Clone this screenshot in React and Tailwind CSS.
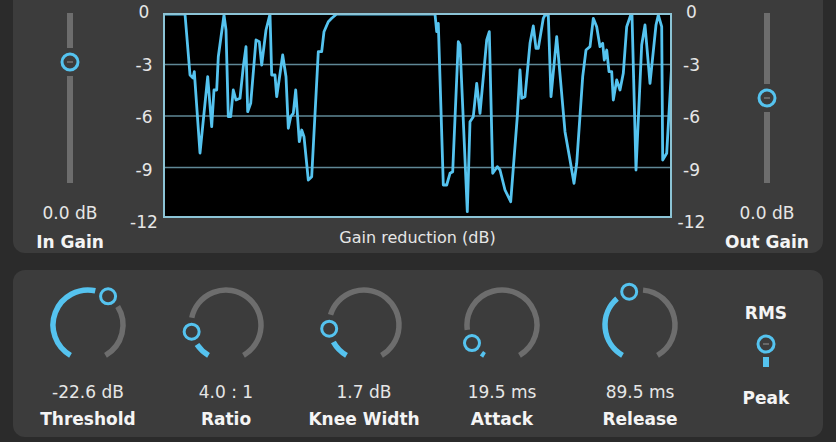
import React from 'react';

const CYAN = '#55c3ef';
const TRACK = '#6d6d6d';
const PANEL = '#3c3c3c';

// gain reduction trace, in page pixels (graph box is 163..672 x 13..218)
const trace = [
  [164, 14], [185, 14], [190, 75], [193, 78], [194.3, 71.7], [200, 153], [207.7, 76.7],
  [211.7, 126.7], [214, 90], [216.7, 90], [218.3, 56.7], [224, 15], [226, 30],
  [228.3, 116.7], [230.7, 116.7], [233.3, 90], [236, 100], [240, 98.3], [243.3, 66.7],
  [246, 46.7], [247.7, 111.7], [250.7, 103.3], [256, 40], [259.3, 41.7], [261.7, 65],
  [266, 30], [270, 14], [271.7, 75], [275, 75], [276.7, 96.7], [282.7, 55], [286, 76.7],
  [288.3, 128.3], [290.7, 116.7], [293.3, 113.3], [295.7, 90], [299.3, 141.7],
  [301.7, 130], [304, 136.7], [308.3, 180], [311.7, 176.7], [318.3, 51.7], [321.7, 51.7],
  [324, 31.7], [328.3, 21.7], [331.7, 18.3], [336.7, 14], [435, 14], [436.7, 31.7],
  [438.3, 23.3], [443.3, 185], [446.7, 185], [450, 173.3], [452.7, 171.7], [458.3, 41.7],
  [460, 45], [467.3, 211.7], [470, 121.7], [473.3, 116.7], [476.7, 83.3], [480, 113.3],
  [486.7, 40], [489.3, 31.7], [492.7, 173.3], [497.3, 166.7], [500, 170], [505, 190],
  [510.7, 201.7], [517.3, 116.7], [520, 70], [521.7, 98.3], [525, 96.7], [530, 43.3],
  [533.3, 26], [536, 48.3], [538.3, 48.3], [543.3, 18.3], [545, 15], [548.3, 15],
  [551, 96.7], [556.7, 36.7], [565, 131.7], [570, 160], [574, 183.3], [576.7, 163.3],
  [582.7, 76.7], [586, 50], [590, 46.7], [593.3, 18.3], [596.7, 26.7], [600, 46.7],
  [602.7, 43.3], [604.3, 60], [606.7, 50], [609, 71.7], [611.7, 71.7], [613.3, 100],
  [616.7, 80], [620, 90], [623.3, 73.3], [626.7, 26.7], [630.7, 15], [632, 15],
  [636, 170], [641.7, 45], [645, 25], [650, 83.3], [656, 25], [658.3, 15], [661.7, 26.7],
  [662.7, 160], [666.7, 153.3], [672, 60],
];

const knobs = [
  { value: '-22.6 dB', label: 'Threshold', angle: 35 },
  { value: '4.0 : 1', label: 'Ratio', angle: -101 },
  { value: '1.7 dB', label: 'Knee Width', angle: -96 },
  { value: '19.5 ms', label: 'Attack', angle: -121 },
  { value: '89.5 ms', label: 'Release', angle: -18 },
];

function pt(cx, cy, r, a) {
  const rad = (a * Math.PI) / 180;
  return [cx + r * Math.sin(rad), cy - r * Math.cos(rad)];
}

function arc(cx, cy, r, a1, a2) {
  if (a2 <= a1) return '';
  const [x1, y1] = pt(cx, cy, r, a1);
  const [x2, y2] = pt(cx, cy, r, a2);
  const large = a2 - a1 > 180 ? 1 : 0;
  return `M ${x1} ${y1} A ${r} ${r} 0 ${large} 1 ${x2} ${y2}`;
}

function Knob({ angle }) {
  const gap = 23;
  const [tx, ty] = pt(45, 45, 35, angle);
  return (
    <svg width="90" height="90" viewBox="0 0 90 90">
      <path d={arc(45, 45, 35, -150, angle - gap)} fill="none" stroke={CYAN} strokeWidth="5.5" />
      <path d={arc(45, 45, 35, angle + gap, 150)} fill="none" stroke={TRACK} strokeWidth="5.5" />
      <circle cx={tx} cy={ty} r="7.5" fill={PANEL} stroke={CYAN} strokeWidth="3" />
    </svg>
  );
}

function Slider({ thumb }) {
  // thumb = y centre inside the 203px tall box, track runs 13..183
  return (
    <svg width="30" height="203" viewBox="0 0 30 203">
      <rect x="12" y="13" width="6" height={thumb - 14 - 13} fill={TRACK} />
      <rect x="12" y={thumb + 14} width="6" height={183 - thumb - 14} fill={TRACK} />
      <circle cx="15" cy={thumb} r="8" fill={PANEL} stroke={CYAN} strokeWidth="3" />
      <rect x="12" y={thumb - 0.75} width="6" height="1.5" fill="#777" />
    </svg>
  );
}

function AxisLabels() {
  return (
    <div className="h-[231px] pt-[3px] flex flex-col justify-between items-center text-[17px] leading-[18px] text-[#e6e6e6]">
      {['0', '-3', '-6', '-9', '-12'].map((t) => (
        <div key={t}>{t}</div>
      ))}
    </div>
  );
}

export default function App() {
  const line = trace.map((p) => p.join(',')).join(' ');

  return (
    <div
      className="w-[836px] h-[442px] bg-[#2b2b2b] px-[13px] flex flex-col overflow-hidden"
      style={{ fontFamily: '"DejaVu Sans", Verdana, sans-serif' }}
    >
      {/* Top panel */}
      <div className="h-[253px] bg-[#3c3c3c] rounded-b-[12px] flex">
        <div className="w-[114px] flex flex-col items-center">
          <Slider thumb={62} />
          <div className="text-[17px] leading-[20px] text-[#e6e6e6]">0.0 dB</div>
          <div className="mt-[9px] text-[17px] leading-[20px] font-bold text-[#f4f4f4]">In Gain</div>
        </div>

        <div className="w-[34px]">
          <AxisLabels />
        </div>

        <div className="ml-[2px] w-[509px] flex flex-col">
          <svg
            className="mt-[13px]"
            width="509"
            height="205"
            viewBox="163 13 509 205"
          >
            <defs>
              <clipPath id="gr">
                <rect x="164" y="13" width="507" height="204" />
              </clipPath>
            </defs>
            <rect x="163" y="13" width="509" height="205" fill="#000" />
            {[64.5, 116, 167.5].map((y) => (
              <line key={y} x1="164" x2="671" y1={y} y2={y} stroke="#5f8896" strokeWidth="1.5" />
            ))}
            <polyline
              points={line}
              fill="none"
              stroke={CYAN}
              strokeWidth="2.8"
              strokeLinejoin="round"
              clipPath="url(#gr)"
            />
            <rect x="164" y="14" width="507" height="203" fill="none" stroke="#8cc4d6" strokeWidth="2" />
          </svg>
          <div className="mt-[10px] text-center text-[16px] leading-[20px] text-[#e6e6e6]">
            Gain reduction (dB)
          </div>
        </div>

        <div className="w-[39px]">
          <AxisLabels />
        </div>

        <div className="flex-1 flex flex-col items-center">
          <Slider thumb={98} />
          <div className="text-[17px] leading-[20px] text-[#e6e6e6]">0.0 dB</div>
          <div className="mt-[9px] text-[17px] leading-[20px] font-bold text-[#f4f4f4]">Out Gain</div>
        </div>
      </div>

      {/* Bottom panel */}
      <div className="mt-[17px] h-[167px] bg-[#3c3c3c] rounded-[12px] flex pl-[6px]">
        {knobs.map((k) => (
          <div key={k.label} className="w-[138px] flex flex-col items-center pt-[10px]">
            <Knob angle={k.angle} />
            <div className="mt-[12px] text-[17px] leading-[20px] text-[#e6e6e6]">{k.value}</div>
            <div className="mt-[7px] text-[17px] leading-[20px] font-bold text-[#f4f4f4]">{k.label}</div>
          </div>
        ))}

        <div className="flex-1 flex flex-col items-center pt-[33px]">
          <div className="text-[17px] leading-[20px] font-bold text-[#f4f4f4]">RMS</div>
          <svg className="mt-[10px]" width="30" height="36" viewBox="0 0 30 36">
            <circle cx="15" cy="11" r="8" fill={PANEL} stroke={CYAN} strokeWidth="3" />
            <rect x="12" y="10.25" width="6" height="1.5" fill="#777" />
            <rect x="12" y="24" width="6" height="10" fill={CYAN} />
          </svg>
          <div className="mt-[19px] text-[17px] leading-[20px] font-bold text-[#f4f4f4]">Peak</div>
        </div>
      </div>
    </div>
  );
}
